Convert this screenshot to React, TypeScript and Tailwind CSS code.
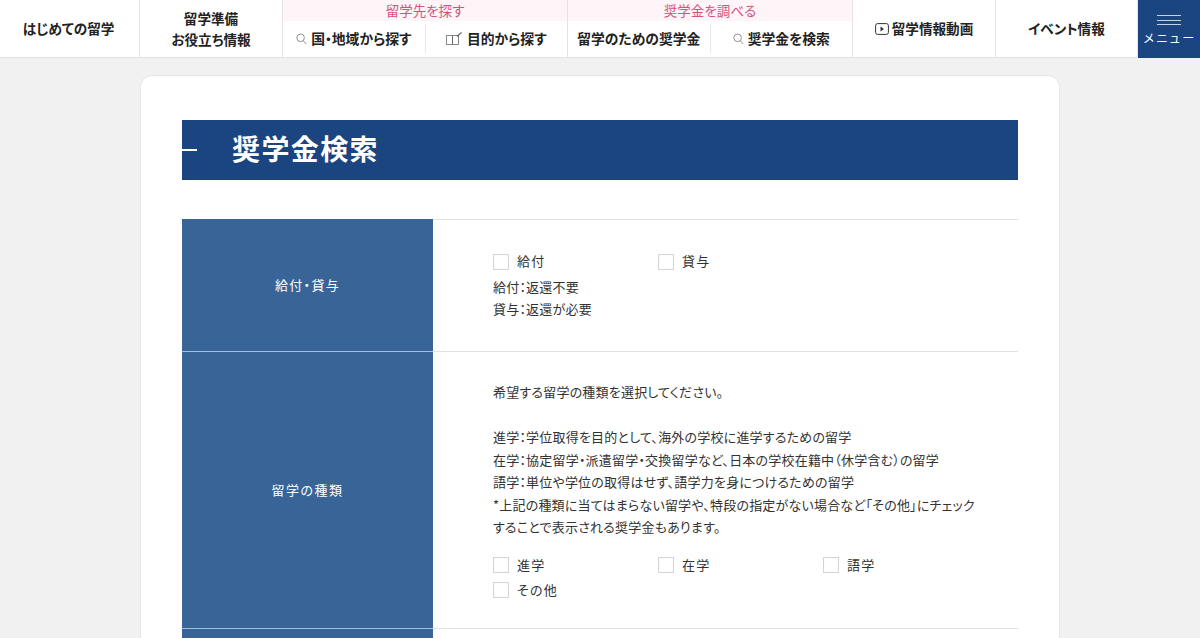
import React from "react";

const Check = ({ label, w = "w-[165px]" }: { label: string; w?: string }) => (
  <label className={`flex items-center ${w} h-[25px]`}>
    <span className="w-4 h-4 border border-[#d5d5d5] bg-white shrink-0 shadow-[inset_0_0_1px_#ddd]" />
    <span className="ml-[8px] tracking-[1.2px]">{label}</span>
  </label>
);

const Mag = () => (
  <svg width="11" height="12" viewBox="0 0 11 12" fill="none" stroke="#777" strokeWidth="0.8" className="shrink-0">
    <circle cx="4.6" cy="4.8" r="3.8" />
    <path d="M7.4 7.8L10.2 11" />
  </svg>
);

const Book = () => (
  <svg width="17" height="14" viewBox="0 0 17 14" fill="none" stroke="#666" strokeWidth="0.8" className="shrink-0">
    <path d="M0.5 3.5H6.5V12.5H0.5ZM6.5 3.5H12.5V12.5H6.5Z" />
    <path d="M11 4.5L15.5 0.5" strokeWidth="1.1" />
  </svg>
);

const Play = () => (
  <svg width="14" height="12" viewBox="0 0 14 12" fill="none" className="shrink-0">
    <rect x="0.6" y="0.6" width="12.8" height="10.8" rx="2" stroke="#333" strokeWidth="1" />
    <path d="M5.5 3.5L9 6L5.5 8.5Z" fill="#333" />
  </svg>
);

const Cell = ({ children, w }: { children: React.ReactNode; w: string }) => (
  <div className={`${w} h-full flex items-center justify-center text-center border-r border-[#e4e4e4] text-[13.6px] font-bold leading-[21px] text-[#222]`}>
    {children}
  </div>
);

const Group = ({ title, items, w }: { title: string; items: React.ReactNode[]; w: string }) => (
  <div className={`${w} h-full flex flex-col border-r border-[#e4e4e4]`}>
    <div className="h-[21px] bg-[#fdf5f8] text-[#d9507f] text-[13.5px] leading-[21px] text-center">{title}</div>
    <div className="flex-1 flex pt-[3px] pb-[4px]">
      {items.map((it, i) => (
        <div
          key={i}
          className={`flex-1 flex items-center justify-center gap-1 text-[13.8px] font-bold text-[#222] ${i === 0 ? "border-r border-[#e8e8e8]" : ""}`}
        >
          {it}
        </div>
      ))}
    </div>
  </div>
);

export default function App() {
  return (
    <div className="h-[638px] overflow-hidden bg-[#f1f1f1] font-['Noto_Sans_CJK_JP','Noto_Sans',sans-serif] [font-feature-settings:'palt'] text-[#333]">
      <header className="h-[58px] bg-white border-b border-[#e2e2e2] flex">
        <Cell w="w-[140px]"><span className="pr-[2px]">はじめての留学</span></Cell>
        <Cell w="w-[143px]">
          <span>留学準備<br />お役立ち情報</span>
        </Cell>
        <Group
          w="w-[285px]"
          title="留学先を探す"
          items={[
            <><Mag /><span>国・地域から探す</span></>,
            <><Book /><span>目的から探す</span></>,
          ]}
        />
        <Group
          w="w-[285px]"
          title="奨学金を調べる"
          items={[
            <span>留学のための奨学金</span>,
            <><Mag /><span>奨学金を検索</span></>,
          ]}
        />
        <Cell w="w-[143px]">
          <span className="flex items-center gap-[3px]"><Play /><span>留学情報動画</span></span>
        </Cell>
        <Cell w="w-[142px]">イベント情報</Cell>
        <div className="flex-1 h-[58px] bg-[#1a4580] flex flex-col items-center text-white">
          <div className="mt-[15px] w-6 flex flex-col gap-[3.5px]">
            <span className="h-px bg-[#c6d2e2]" />
            <span className="h-px bg-[#c6d2e2]" />
            <span className="h-px bg-[#c6d2e2]" />
          </div>
          <span className="mt-[4px] pl-[2px] text-[12px] leading-[18px] tracking-[2.4px]">メニュー</span>
        </div>
      </header>

      <main className="mt-[17px] mx-auto w-[920px] bg-white rounded-t-[12px] border border-[#e6e6e6] pt-[44px] px-[41px] pb-10">
        <h1 className="relative h-[60px] bg-[#1a4580] text-white text-[28px] font-bold leading-[57px] pl-[50px] tracking-[1.4px]">
          <span className="absolute left-0 top-[29px] w-[15px] h-[2px] bg-white" />
          奨学金検索
        </h1>

        <div className="mt-[39px] text-[13px] leading-[22.5px] text-[#333] tracking-[0.2px]">
          <div className="flex h-[133px]">
            <div className="w-[251px] shrink-0 bg-[#396497] border-b border-[#a9bfd9] text-white flex items-center justify-center tracking-[1.3px]">給付・貸与</div>
            <div className="flex-1 pl-[60px] pt-[29px] border-t border-b border-[#e2e2e2]">
              <div className="flex">
                <Check label="給付" />
                <Check label="貸与" />
              </div>
              <p className="mt-[2px] leading-[22px]">給付：返還不要</p>
              <p className="leading-[22px]">貸与：返還が必要</p>
            </div>
          </div>
          <div className="flex h-[277px]">
            <div className="w-[251px] shrink-0 bg-[#396497] border-b border-[#a9bfd9] text-white flex items-center justify-center tracking-[1.5px]">留学の種類</div>
            <div className="flex-1 pl-[60px] pt-[29px] border-b border-[#e2e2e2]">
              <p>希望する留学の種類を選択してください。</p>
              <p className="mt-[22.5px]">進学：学位取得を目的として、海外の学校に進学するための留学</p>
              <p>在学：協定留学・派遣留学・交換留学など、日本の学校在籍中（休学含む）の留学</p>
              <p>語学：単位や学位の取得はせず、語学力を身につけるための留学</p>
              <p>*上記の種類に当てはまらない留学や、特段の指定がない場合など「その他」にチェック</p>
              <p>することで表示される奨学金もあります。</p>
              <div className="mt-[14px] flex flex-wrap">
                <Check label="進学" />
                <Check label="在学" />
                <Check label="語学" />
                <Check label="その他" />
              </div>
            </div>
          </div>
          <div className="flex h-[60px]">
            <div className="w-[251px] shrink-0 bg-[#396497]" />
          </div>
        </div>
      </main>
    </div>
  );
}
